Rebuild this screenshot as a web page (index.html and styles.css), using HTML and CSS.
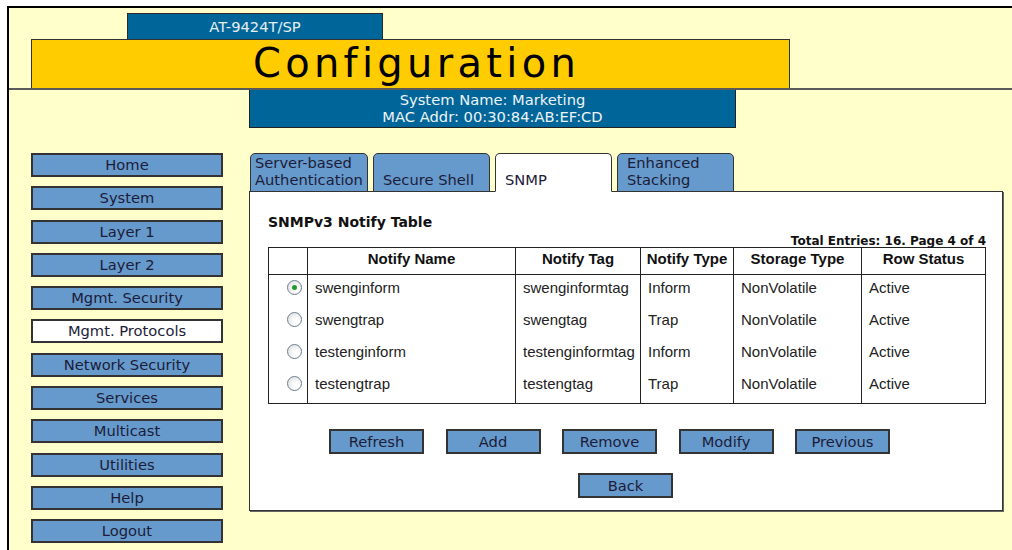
FILE: index.html
```html
<!DOCTYPE html>
<html lang="en">
<head>
  <meta charset="UTF-8" />
  <title>Configuration - SNMP</title>
  <link rel="stylesheet" href="styles.css">
</head>
<body>
  <div class="frame">
    <div class="masthead">
      <div class="model">AT-9424T/SP</div>
      <div class="banner">Configuration</div>
    </div>
    <div class="sysinfo">
      System Name: Marketing<br />
      MAC Addr: 00:30:84:AB:EF:CD
    </div>

    <div class="main">
      <nav class="menu">
        <a class="menu-btn">Home</a>
        <a class="menu-btn">System</a>
        <a class="menu-btn">Layer 1</a>
        <a class="menu-btn">Layer 2</a>
        <a class="menu-btn">Mgmt. Security</a>
        <a class="menu-btn active">Mgmt. Protocols</a>
        <a class="menu-btn">Network Security</a>
        <a class="menu-btn">Services</a>
        <a class="menu-btn">Multicast</a>
        <a class="menu-btn">Utilities</a>
        <a class="menu-btn">Help</a>
        <a class="menu-btn">Logout</a>
      </nav>

      <div class="content">
        <div class="tabs">
          <div class="tab first">Server-based<br />Authentication</div>
          <div class="tab">Secure Shell</div>
          <div class="tab current">SNMP</div>
          <div class="tab">Enhanced<br />Stacking</div>
        </div>

        <div class="panel">
          <h2 class="title">SNMPv3 Notify Table</h2>
          <div class="total">Total Entries: 16. Page 4 of 4</div>
          <table class="grid">
            <thead>
              <tr>
                <th class="c-sel"></th>
                <th class="c-name">Notify Name</th>
                <th class="c-tag">Notify Tag</th>
                <th class="c-type">Notify Type</th>
                <th class="c-store">Storage Type</th>
                <th class="c-status">Row Status</th>
              </tr>
            </thead>
            <tbody>
              <tr>
                <td class="c-sel"><span class="radio checked"></span></td>
                <td>swenginform</td>
                <td>swenginformtag</td>
                <td>Inform</td>
                <td>NonVolatile</td>
                <td>Active</td>
              </tr>
              <tr>
                <td class="c-sel"><span class="radio"></span></td>
                <td>swengtrap</td>
                <td>swengtag</td>
                <td>Trap</td>
                <td>NonVolatile</td>
                <td>Active</td>
              </tr>
              <tr>
                <td class="c-sel"><span class="radio"></span></td>
                <td>testenginform</td>
                <td>testenginformtag</td>
                <td>Inform</td>
                <td>NonVolatile</td>
                <td>Active</td>
              </tr>
              <tr>
                <td class="c-sel"><span class="radio"></span></td>
                <td>testengtrap</td>
                <td>testengtag</td>
                <td>Trap</td>
                <td>NonVolatile</td>
                <td>Active</td>
              </tr>
            </tbody>
          </table>

          <div class="actions">
            <button class="btn">Refresh</button>
            <button class="btn">Add</button>
            <button class="btn">Remove</button>
            <button class="btn">Modify</button>
            <button class="btn">Previous</button>
          </div>
          <div class="actions back">
            <button class="btn">Back</button>
          </div>
        </div>
      </div>
    </div>
  </div>
</body>
</html>
```

FILE: styles.css
```css
body {
  margin: 0;
  background: #fff;
  font-family: "DejaVu Sans", Verdana, sans-serif;
  color: #1c1c38;
}
.frame {
  margin: 6px 0 0 7px;
  height: 542px;
  overflow: hidden;
  background: #ffffcc;
  border-top: 2px solid #000;
  border-left: 2px solid #000;
}

/* header */
.masthead {
  padding-top: 5px;
  border-bottom: 2px solid #5a5a5a;
}
.model {
  box-sizing: border-box;
  margin-left: 118px;
  width: 256px;
  height: 26px;
  background: #006699;
  border: 1px solid #2a2a2a;
  border-bottom: none;
  color: #e6eef6;
  font-size: 14.7px;
  line-height: 25px;
  text-align: center;
}
.banner {
  box-sizing: border-box;
  margin-left: 22px;
  width: 759px;
  height: 49px;
  padding-left: 12px;
  background: #ffcc00;
  border: 1px solid #333;
  border-bottom: none;
  color: #000;
  font-size: 40px;
  letter-spacing: 4.3px;
  line-height: 47px;
  text-align: center;
}
.sysinfo {
  box-sizing: border-box;
  margin-left: 240px;
  width: 487px;
  height: 38px;
  padding-top: 1px;
  background: #006699;
  border: 1px solid #222;
  border-top: none;
  color: #eef3f8;
  font-size: 14.7px;
  line-height: 17px;
  text-align: center;
}

/* body */
.main {
  display: flex;
  gap: 26px;
  margin-top: 25px;
  padding-left: 22px;
}
.menu {
  display: flex;
  flex-direction: column;
  gap: 9.3px;
  width: 192px;
}
.menu-btn {
  box-sizing: border-box;
  height: 24px;
  background: #6699cc;
  border: 2px solid #333;
  font-size: 14.7px;
  line-height: 20px;
  text-align: center;
}
.menu-btn.active {
  background: #fff;
}

.content {
  width: 754px;
}
.tabs {
  display: flex;
  gap: 5px;
  padding-left: 1px;
  height: 38px;
}
.tab {
  box-sizing: border-box;
  position: relative;
  display: flex;
  align-items: flex-end;
  width: 117px;
  height: 39px;
  padding: 2px 4px 3px 9px;
  background: #6699cc;
  border: 1px solid #333;
  border-radius: 5px 5px 0 0;
  font-size: 14.7px;
  line-height: 17px;
}
.tab.first {
  width: 118px;
  padding-left: 4px;
}
.tab.current {
  background: #fff;
  border-bottom-color: #fff;
  z-index: 1;
}

.panel {
  box-sizing: border-box;
  height: 320px;
  padding: 22px 16px 0 18px;
  background: #fff;
  border: 1px solid #333;
  box-shadow: 1px 1px 0 #666;
}
.title {
  margin: 0;
  font-size: 14px;
  font-weight: bold;
  line-height: 17px;
  color: #111;
}
.total {
  margin-top: 4px;
  font-size: 12px;
  font-weight: bold;
  line-height: 12px;
  text-align: right;
  color: #111;
}

.grid {
  width: 718px;
  border-collapse: collapse;
  border: 1px solid #222;
  font-family: "Liberation Sans", Arial, sans-serif;
  font-size: 15px;
  color: #222;
  table-layout: fixed;
}
.grid th {
  height: 20px;
  padding: 0 0 6px;
  border: 1px solid #222;
  font-weight: bold;
  color: #111;
  text-align: center;
}
.grid td {
  height: 25px;
  padding: 0 0 7px 7px;
  border-left: 1px solid #222;
  border-right: 1px solid #222;
  white-space: nowrap;
}
.grid td.c-sel {
  padding-left: 18px;
}
.c-sel { width: 38px; }
.c-name { width: 207px; }
.c-tag { width: 124px; }
.c-type { width: 92px; }
.c-store { width: 127px; }

.radio {
  box-sizing: border-box;
  position: relative;
  display: block;
  width: 15px;
  height: 15px;
  border: 1px solid #6e7f8f;
  border-radius: 50%;
  background: radial-gradient(circle at 65% 65%, #fff 20%, #dcdde0 90%);
}
.radio.checked::after {
  content: "";
  position: absolute;
  left: 4px;
  top: 4px;
  width: 5px;
  height: 5px;
  border-radius: 50%;
  background: #1f9a2c;
}

.actions {
  display: flex;
  gap: 21.5px;
  margin-top: 25px;
  padding-left: 61px;
}
.actions.back {
  margin-top: 19px;
  padding-left: 310px;
}
.btn {
  box-sizing: border-box;
  width: 95px;
  height: 25px;
  padding: 0;
  background: #6699cc;
  border: 2px solid #333;
  font-family: "DejaVu Sans", Verdana, sans-serif;
  font-size: 14.7px;
  color: #1c1c38;
}
```
